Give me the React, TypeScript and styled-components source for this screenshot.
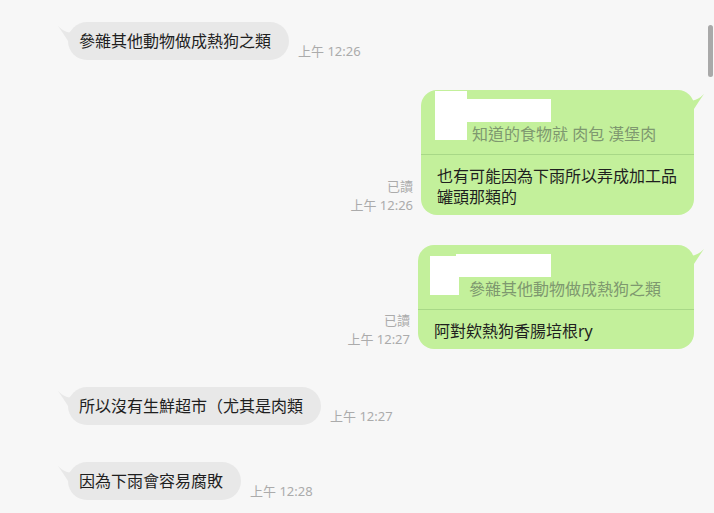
import React from 'react'
import styled, { createGlobalStyle } from 'styled-components'

const GlobalStyle = createGlobalStyle`
  html, body {
    margin: 0;
    background: #f7f7f7;
  }
  body {
    font-family: "Noto Sans", "Noto Sans CJK TC", sans-serif;
    color: #1f1f1f;
    overflow: hidden;
  }
`

const Chat = styled.main`
  height: 513px;
  box-sizing: border-box;
  padding: 22px 20px 0 68px;
  display: flex;
  flex-direction: column;
`

const Row = styled.div<{ $mine?: boolean; $gap: number }>`
  display: flex;
  align-items: flex-end;
  justify-content: ${(p) => (p.$mine ? 'flex-end' : 'flex-start')};
  gap: ${(p) => (p.$mine ? 8 : 9)}px;
  margin-top: ${(p) => p.$gap}px;
`

const Bubble = styled.div<{ $mine?: boolean }>`
  position: relative;
  background: ${(p) => (p.$mine ? '#c3f09b' : '#e8e8e8')};
  border-radius: ${(p) => (p.$mine ? 16 : 19)}px;
  font-size: 16px;
  line-height: 21px;
  padding: ${(p) => (p.$mine ? '0' : '9px 18px 8px 11px')};
  white-space: ${(p) => (p.$mine ? 'normal' : 'nowrap')};
`

const TailSvg = styled.svg<{ $mine?: boolean }>`
  position: absolute;
  top: 0;
  width: 18px;
  height: 20px;
  ${(p) => (p.$mine ? 'right: -12px;' : 'left: -12px; transform: scaleX(-1);')}
`

const Quote = styled.div`
  position: relative;
  padding: 34px 33px 10px 51px;
  border-bottom: 1px solid #a8d887;
  color: #7e986f;
  line-height: 20px;
  white-space: nowrap;
`

const Redact = styled.span<{ $x: number; $y: number; $w: number; $h: number }>`
  position: absolute;
  left: ${(p) => p.$x}px;
  top: ${(p) => p.$y}px;
  width: ${(p) => p.$w}px;
  height: ${(p) => p.$h}px;
  background: #ffffff;
`

const Body = styled.div`
  padding: 11px 16px 7px;
  max-width: 241px;
`

const Meta = styled.div<{ $mine?: boolean }>`
  display: flex;
  flex-direction: column;
  align-items: flex-end;
  font-size: 13px;
  line-height: ${(p) => (p.$mine ? 19 : 18)}px;
  color: #ababab;
  white-space: nowrap;
`

const ScrollThumb = styled.div`
  position: fixed;
  top: 25px;
  right: 1px;
  width: 5px;
  height: 52px;
  border-radius: 3px;
  background: #a9a9a9;
`

const Tail: React.FC<{ mine?: boolean; color: string }> = ({ mine, color }) => (
  <TailSvg $mine={mine} viewBox="-6 0 18 20">
    <path d="M-6 7 L-1 10.4 Q4 10 10 4 Q5 11 0 19 L-6 19 Z" fill={color} />
  </TailSvg>
)

type Box = { x: number; y: number; w: number; h: number }

type Msg =
  | { kind: 'in'; text: string; time: string; gap: number }
  | { kind: 'out'; quote: string; boxes: Box[]; text: string; time: string; gap: number }

const messages: Msg[] = [
  { kind: 'in', text: '參雜其他動物做成熱狗之類', time: '上午 12:26', gap: 0 },
  {
    kind: 'out',
    quote: '知道的食物就 肉包 漢堡肉',
    boxes: [
      { x: 14, y: 1, w: 32, h: 49 },
      { x: 46, y: 9, w: 84, h: 23 },
    ],
    text: '也有可能因為下雨所以弄成加工品罐頭那類的',
    time: '上午 12:26',
    gap: 30,
  },
  {
    kind: 'out',
    quote: '參雜其他動物做成熱狗之類',
    boxes: [
      { x: 12, y: 11, w: 29, h: 39 },
      { x: 38, y: 9, w: 95, h: 23 },
    ],
    text: '阿對欸熱狗香腸培根ry',
    time: '上午 12:27',
    gap: 30,
  },
  { kind: 'in', text: '所以沒有生鮮超市（尤其是肉類', time: '上午 12:27', gap: 38 },
  { kind: 'in', text: '因為下雨會容易腐敗', time: '上午 12:28', gap: 37 },
]

const App: React.FC = () => {
  return (
    <>
      <GlobalStyle />
      <Chat>
        {messages.map((m, i) =>
          m.kind === 'in' ? (
            <Row key={i} $gap={m.gap}>
              <Bubble>
                <Tail color="#e8e8e8" />
                {m.text}
              </Bubble>
              <Meta>{m.time}</Meta>
            </Row>
          ) : (
            <Row key={i} $gap={m.gap} $mine>
              <Meta $mine>
                <span>已讀</span>
                <span>{m.time}</span>
              </Meta>
              <Bubble $mine>
                <Tail mine color="#c3f09b" />
                <Quote>
                  {m.boxes.map((b, j) => (
                    <Redact key={j} $x={b.x} $y={b.y} $w={b.w} $h={b.h} />
                  ))}
                  {m.quote}
                </Quote>
                <Body>{m.text}</Body>
              </Bubble>
            </Row>
          )
        )}
      </Chat>
      <ScrollThumb />
    </>
  )
}

export default App
